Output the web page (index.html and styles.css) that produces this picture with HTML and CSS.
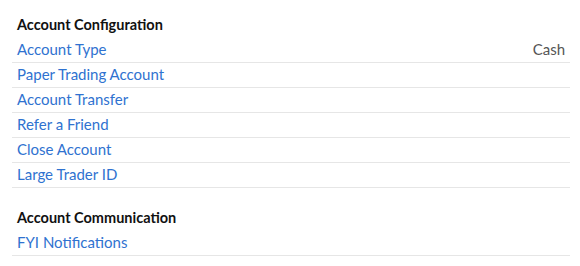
FILE: index.html
```html
<!DOCTYPE html>
<html lang="en">
<head>
  <meta charset="UTF-8" />
  <title>Account Settings</title>
  <link rel="stylesheet" href="styles.css">
</head>
<body>

  <!-- Account configuration -->
  <div class="section">
    <h4 class="section-title">Account Configuration</h4>
    <div class="row"><a href="#">Account Type</a><span class="value">Cash</span></div>
    <div class="row"><a href="#">Paper Trading Account</a></div>
    <div class="row"><a href="#">Account Transfer</a></div>
    <div class="row"><a href="#">Refer a Friend</a></div>
    <div class="row"><a href="#">Close Account</a></div>
    <div class="row"><a href="#">Large Trader ID</a></div>
  </div>

  <!-- Account communication -->
  <div class="section">
    <h4 class="section-title">Account Communication</h4>
    <div class="row"><a href="#">FYI Notifications</a></div>
  </div>

</body>
</html>
```

FILE: styles.css
```css
body {
  margin: 0;
  padding: 13px 10px 0 12px;
  font-family: Lato, "Open Sans", sans-serif;
  font-size: 15px;
  background: #fff;
}

.section + .section { margin-top: 18px; }

.section-title {
  margin: 0;
  height: 25px;
  line-height: 23px;
  padding-left: 5px;
  font-size: 14.5px;
  font-weight: 700;
  color: #111;
}

/* list rows */
.row {
  display: flex;
  justify-content: space-between;
  align-items: center;
  box-sizing: border-box;
  height: 25px;
  padding: 0 5px 2px;
  border-bottom: 1px solid #e6e6e6;
}
.row a {
  color: #2f72d0;
  text-decoration: none;
}
.row .value { color: #555; }
```
